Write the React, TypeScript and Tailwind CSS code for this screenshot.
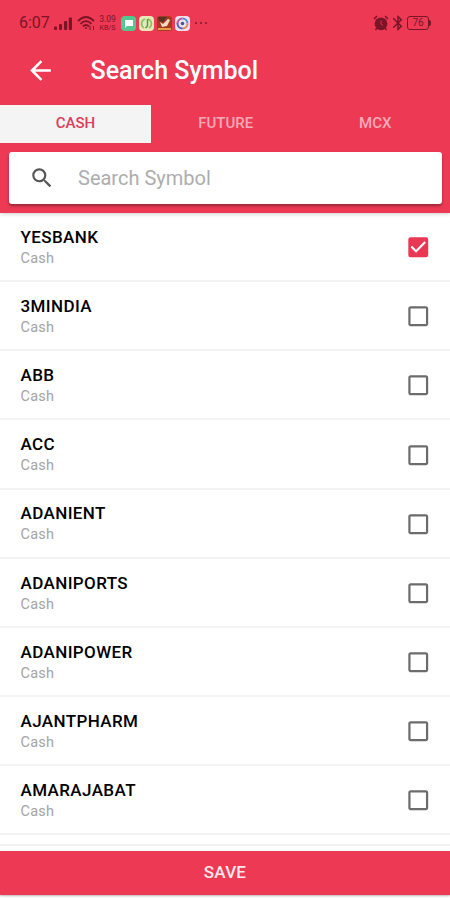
import React, { useState } from 'react';
import { MdArrowBack, MdBluetooth, MdCheckBox, MdCheckBoxOutlineBlank, MdSearch } from 'react-icons/md';

const TABS = ['CASH', 'FUTURE', 'MCX'];

const SYMBOLS = [
  'YESBANK',
  '3MINDIA',
  'ABB',
  'ACC',
  'ADANIENT',
  'ADANIPORTS',
  'ADANIPOWER',
  'AJANTPHARM',
  'AMARAJABAT',
];

function StatusBar() {
  return (
    <div className="flex h-[45px] items-center pl-[19px] pr-[19px] pt-px text-[#7c1428]">
      <span className="w-[35px] text-[16px] leading-none">6:07</span>

      {/* Signal */}
      <svg viewBox="0 0 18 13" fill="currentColor" className="h-[13px] w-[18px]">
        <rect x="0" y="9.5" width="3" height="3.5" rx="1" />
        <rect x="5" y="7" width="3" height="6" rx="1" />
        <rect x="10" y="4" width="3.2" height="9" rx="1" />
        <rect x="14.8" y="0.5" width="3.2" height="12.5" rx="1" />
      </svg>

      {/* Wifi */}
      <svg viewBox="0 0 18 16" fill="none" stroke="currentColor" strokeWidth="1.8" className="ml-[5px] h-[16px] w-[18px]">
        <path d="M1 6 Q9 -2 17 6" />
        <path d="M3.5 8.8 Q9 3.4 14.5 8.8" />
        <path d="M6 11.5 Q9 8.5 12 11.5" />
        <circle cx="9" cy="13" r="1" fill="currentColor" stroke="none" />
        <path d="M13 11v4M16.5 11v4" strokeWidth="1" />
      </svg>

      <div className="ml-[3px] flex w-[19px] flex-col items-center">
        <span className="text-[8.5px] leading-[9px]">3.09</span>
        <span className="text-[7px] leading-[8px]">KB/S</span>
      </div>

      {/* Notifications */}
      <div className="ml-[4px] flex gap-[3px]">
        <svg viewBox="0 0 15 15" className="size-[15px]">
          <rect width="15" height="15" rx="4" fill="#55c890" />
          <path d="M4 4h8v6H6l-2 2z" fill="#fff" />
        </svg>
        <svg viewBox="0 0 15 15" className="size-[15px]">
          <rect width="15" height="15" rx="4" fill="#e8e9bb" />
          <path d="M6 3a5 5 0 0 0-1 9M9 3a5 5 0 0 1 1 9" fill="none" stroke="#8fc264" strokeWidth="1.8" />
          <path d="M8.5 3v7l-2 2" fill="none" stroke="#559b38" strokeWidth="1.5" />
        </svg>
        <svg viewBox="0 0 15 15" className="size-[15px]">
          <rect width="15" height="15" rx="3" fill="#a63a20" />
          <path d="M1 1h9L6 6 2 5z" fill="#573225" />
          <path d="M3 6l3 2 5-5 2 1-3 6-5 1z" fill="#f5dcc1" />
          <path d="M1 13h13" stroke="#e2a047" strokeWidth="2" />
        </svg>
        <svg viewBox="0 0 15 15" className="size-[15px]">
          <rect width="15" height="15" rx="4" fill="#eee1ee" />
          <path d="M2.5 8a5 5 0 0 1 5-5.5" fill="none" stroke="#b9589c" strokeWidth="2" />
          <path d="M7.5 2.5a5 5 0 0 1 5 5" fill="none" stroke="#4a91cf" strokeWidth="2" />
          <path d="M12.5 7.5a5 5 0 0 1-5 5" fill="none" stroke="#e58862" strokeWidth="2" />
          <path d="M7.5 12.5a5 5 0 0 1-5-5" fill="none" stroke="#4b68b4" strokeWidth="2" />
          <circle cx="7.5" cy="7.5" r="1.8" fill="#3d599f" />
        </svg>
      </div>
      <svg viewBox="0 0 12 2" fill="currentColor" className="ml-[5px] h-[2px] w-[12px]">
        <circle cx="1" cy="1" r="0.9" />
        <circle cx="6" cy="1" r="0.9" />
        <circle cx="11" cy="1" r="0.9" />
      </svg>

      {/* Alarm */}
      <svg viewBox="0 0 16 16" className="ml-auto h-[16px] w-[16px]">
        <circle cx="8" cy="8.8" r="6.4" fill="currentColor" />
        <path d="M1 4l3-3M15 4l-3-3M4 13l-1.5 2M12 13l1.5 2" stroke="currentColor" strokeWidth="1.5" />
        <path d="M8 5.5v3.5l2 1.5" fill="none" stroke="#d5304b" strokeWidth="1" />
      </svg>
      <MdBluetooth className="h-[18px] w-[18px]" />
      <div className="flex items-center">
        <div className="flex h-[14px] w-[22px] items-center justify-center rounded-[3px] border border-[#7c1428] text-[10px] leading-none">
          76
        </div>
        <div className="h-[6px] w-[2px] rounded-r-sm bg-[#7c1428]" />
      </div>
    </div>
  );
}

interface SymbolRowProps {
  name: string;
  checked: boolean;
  onToggle: () => void;
}

function SymbolRow({ name, checked, onToggle }: SymbolRowProps) {
  return (
    <div
      onClick={onToggle}
      className="flex h-[69.17px] shrink-0 items-center justify-between border-b-2 border-[#f3f3f3] pl-[20.5px] pr-[18.5px]"
    >
      <div className="pt-[3.5px]">
        <div className="text-[17px] font-medium leading-[21px] tracking-[0.4px] text-black">{name}</div>
        <div className="text-[14.5px] leading-[22px] tracking-[0.2px] text-[#a4a4a4]">Cash</div>
      </div>
      {checked ? (
        <MdCheckBox className="mt-[1.5px] size-[26.5px] text-[#e83853]" />
      ) : (
        <MdCheckBoxOutlineBlank className="mt-[1.5px] size-[26.5px] text-[#6c6c6c]" />
      )}
    </div>
  );
}

export default function App() {
  const [tab,      setTab]      = useState('CASH');
  const [query,    setQuery]    = useState('');
  const [selected, setSelected] = useState<string[]>(['YESBANK']);

  const toggle = (name: string) => {
    setSelected(selected.includes(name) ? selected.filter((s) => s !== name) : [...selected, name]);
  };

  const visible = SYMBOLS.filter((s) => s.includes(query.toUpperCase()));

  return (
    <div className="flex h-[900px] w-[450px] flex-col overflow-hidden bg-white font-[Roboto,sans-serif]">
      <header className="z-10 h-[213px] shrink-0 bg-[#ed3954] shadow-[0_1px_4px_rgba(0,0,0,0.2)]">
        <StatusBar />

        <div className="flex h-[60px] items-center pb-[9px] pl-[25px]">
          <MdArrowBack className="size-[31px] text-white" />
          <h1 className="ml-[34.5px] text-[25px] font-medium leading-none text-white">Search Symbol</h1>
        </div>

        {/* Tabs */}
        <div className="flex h-[38px]">
          {TABS.map((t) => (
            <button
              key={t}
              onClick={() => setTab(t)}
              className={
                t === tab
                  ? 'w-[151px] bg-[#f4f4f4] pb-[2px] text-[15px] font-medium text-[#dc3c5c]'
                  : 'flex-1 pb-[2px] text-[15px] font-medium text-[#f9a9b6]'
              }
            >
              {t}
            </button>
          ))}
        </div>

        {/* Search */}
        <div className="ml-[9px] mr-[8px] mt-[9px] flex h-[52px] items-center rounded-[3px] bg-white pl-[20px] shadow-[0_2px_3px_rgba(0,0,0,0.35)]">
          <MdSearch className="size-[26px] text-[#555]" />
          <input
            value={query}
            onChange={(e) => setQuery(e.target.value)}
            placeholder="Search Symbol"
            className="ml-[23px] w-[300px] text-[20px] text-[#333] outline-none placeholder:text-[#adadad]"
          />
        </div>
      </header>

      <main className="flex min-h-0 flex-1 flex-col overflow-hidden">
        {visible.map((name) => (
          <SymbolRow key={name} name={name} checked={selected.includes(name)} onToggle={() => toggle(name)} />
        ))}
        <div className="h-[11px] shrink-0 border-b-2 border-[#f1f1f1]" />
      </main>

      <button className="mb-[5px] h-[44px] shrink-0 bg-[#ed3954] text-[17px] font-medium tracking-[0.2px] text-[#ffe9ec] shadow-[0_1px_2px_rgba(0,0,0,0.3)]">
        SAVE
      </button>
    </div>
  );
}
